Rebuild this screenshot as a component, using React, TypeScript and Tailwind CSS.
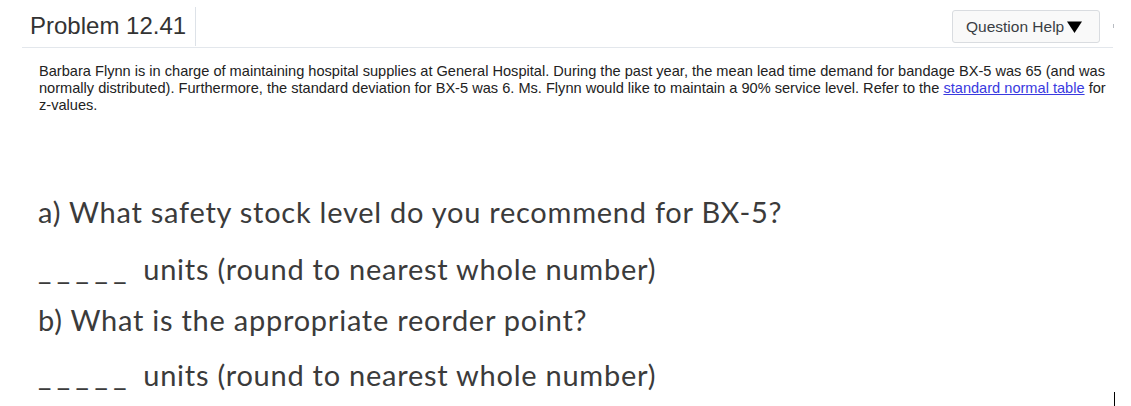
import React from "react";

const arial = { fontFamily: '"Liberation Sans", Arial, sans-serif' };
const lato = { fontFamily: 'Lato, "Open Sans", sans-serif' };

function Header() {
    return (
        <div className="ml-[22px] flex h-[48px] w-[1091px] items-start border-b border-[#e3e7ec]">
            <h1 className="mt-[14px] pl-[8px] text-[24px] leading-none text-[#333]" style={arial}>
                Problem 12.41
            </h1>
            <span className="ml-[9px] mt-[7px] h-[39px] w-px bg-[#dde2e8]" />
            <div className="flex-1" />
            <button
                className="mt-[10px] flex h-[33px] w-[148px] items-center rounded-[3px] border border-[#d9dce0] bg-[#f9f9f9] pl-[13px] text-[15.5px] text-[#3a3e44]"
                style={arial}
            >
                Question Help
                <svg width="15" height="12" viewBox="0 0 15 12" className="ml-[3px]">
                    <path d="M0 0.5h15L7.5 12z" fill="#000" />
                </svg>
            </button>
            <div className="w-[13px]" />
        </div>
    );
}

function AnswerLine({ top }: { top: string }) {
    return (
        <p className={`${top} h-[32px] text-[29px] leading-[32px] tracking-[0.75px] text-[#3b3b3b]`} style={lato}>
            <span className="tracking-[5.5px]">_____</span>{" "}
            <span className="ml-[3px]">units (round to nearest whole number)</span>
        </p>
    );
}

export default function App() {
    return (
        <div className="relative h-[406px] w-[1131px] overflow-hidden bg-white">
            <Header />
            <span className="absolute left-[1113px] top-[24px] h-[4px] w-px bg-[#b8bcc2]" />

            <p className="mt-[15px] w-[1114px] pl-[39px] text-[14.6px] leading-[17px] text-[#222]" style={arial}>
                Barbara Flynn is in charge of maintaining hospital supplies at General Hospital. During the past year,
                the mean lead time demand for bandage BX-5 was 65 (and was normally distributed). Furthermore, the
                standard deviation for BX-5 was 6. Ms. Flynn would like to maintain a 90% service level. Refer to the{" "}
                <a href="#" className="text-[#3a3ae0] underline">
                    standard normal table
                </a>{" "}
                for <span className="whitespace-nowrap">z-values.</span>
            </p>

            <div className="pl-[38px]">
                <p className="mt-[82px] h-[32px] text-[29px] leading-[32px] tracking-[0.75px] text-[#3b3b3b]" style={lato}>
                    a) What safety stock level do you recommend for BX-5?
                </p>
                <AnswerLine top="mt-[25px]" />
                <p className="mt-[19px] h-[32px] text-[29px] leading-[32px] tracking-[0.75px] text-[#3b3b3b]" style={lato}>
                    b) What is the appropriate reorder point?
                </p>
                <AnswerLine top="mt-[23px]" />
            </div>

            <span className="absolute left-[1114px] top-[392px] h-[14px] w-px bg-black" />
        </div>
    );
}
